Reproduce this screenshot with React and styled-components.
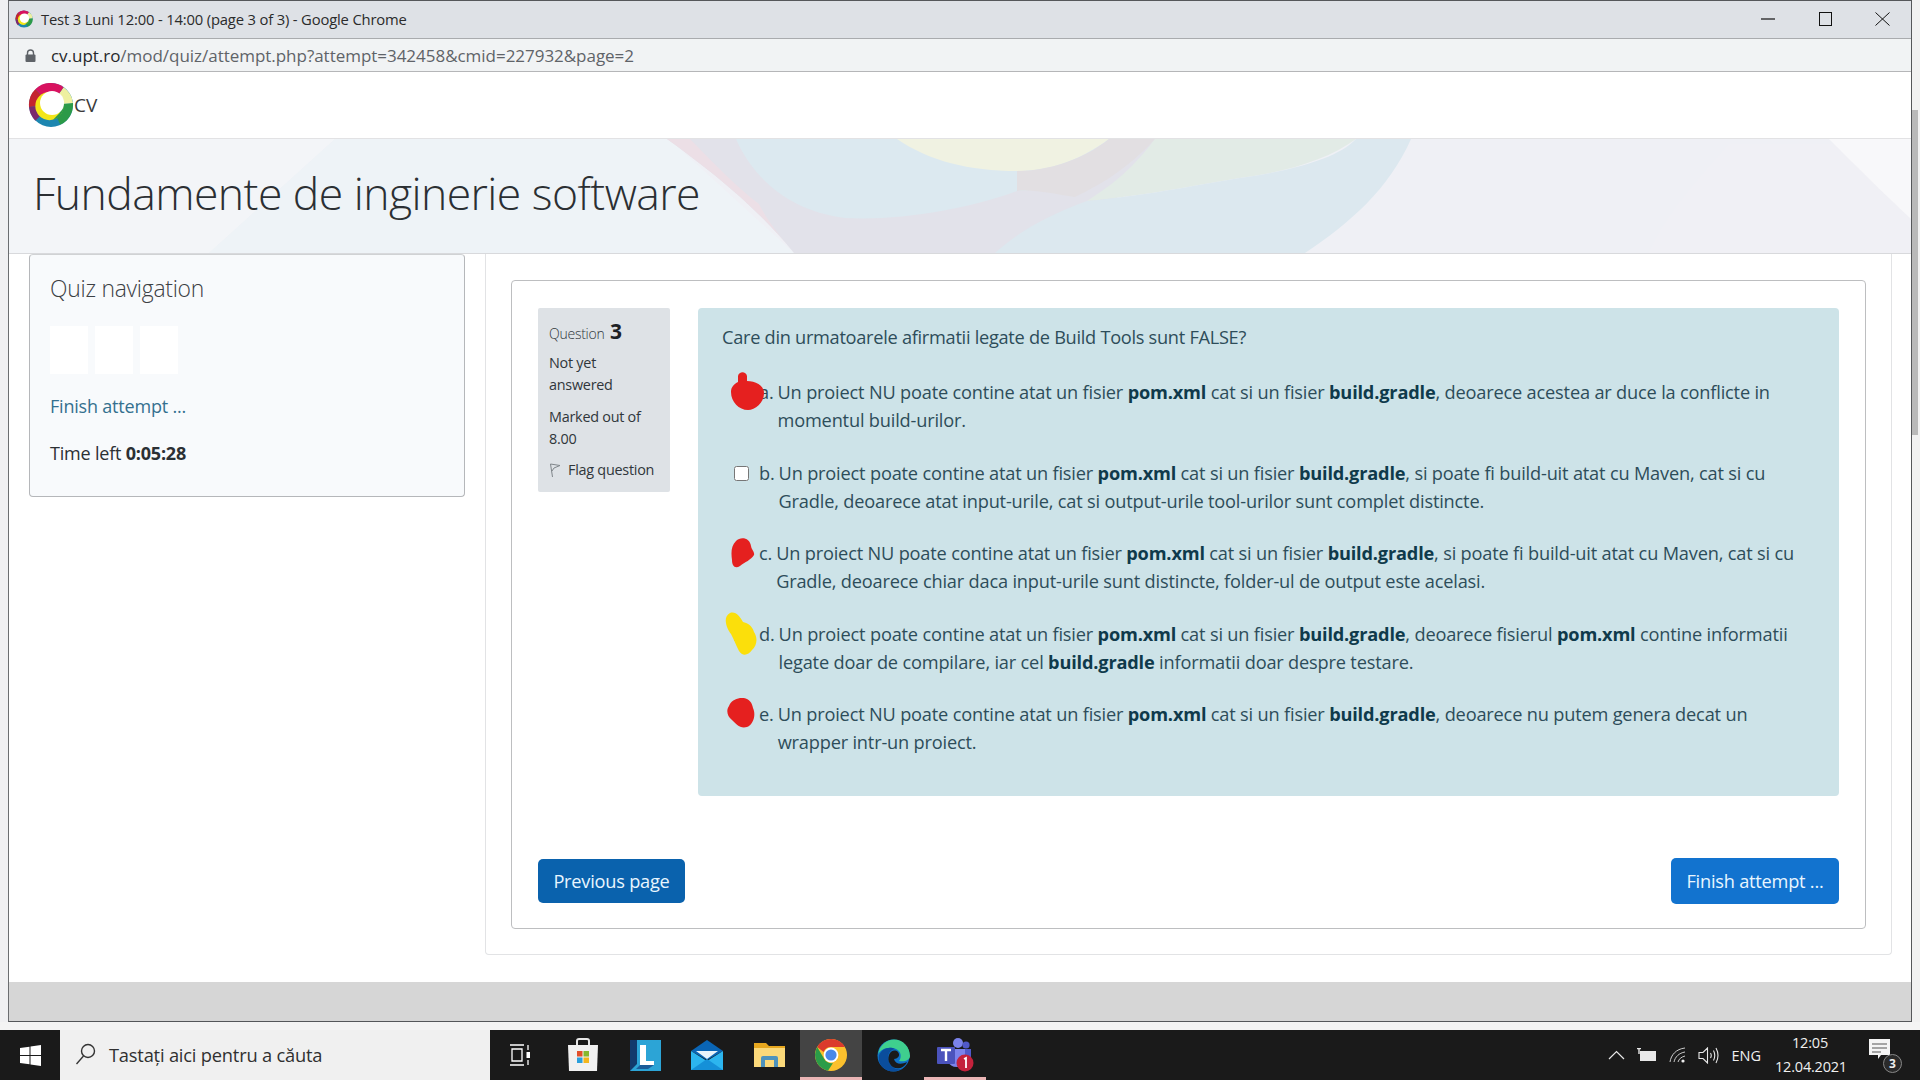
import React from 'react'
import styled, { createGlobalStyle } from 'styled-components'

const GlobalStyle = createGlobalStyle`
  html, body {
    margin: 0;
    padding: 0;
    background: #f1f1f1;
  }
  body {
    font-family: 'Open Sans', 'Noto Sans', sans-serif;
    overflow: hidden;
  }
  * {
    box-sizing: border-box;
  }
`

const Screen = styled.div`
  width: 1920px;
  height: 1080px;
  display: flex;
  flex-direction: column;
  overflow: hidden;
`

const Desktop = styled.div`
  height: 1030px;
  display: flex;
  align-items: flex-start;
  background: linear-gradient(#eeeeee, #f4f4f4);
`

const LeftEdge = styled.div`
  width: 8px;
  height: 1022px;
  background: #f0f0f2;
`

const Chrome = styled.div`
  width: 1904px;
  height: 1022px;
  display: flex;
  flex-direction: column;
  border-left: 1px solid #6b6d70;
  border-right: 1px solid #55575a;
  border-top: 1px solid #55575a;
  border-bottom: 1px solid #55575a;
  background: #ffffff;
`

const RightEdge = styled.div`
  width: 8px;
  height: 1022px;
  display: flex;
  flex-direction: column;
  background: #f1f1f1;
`

const ScrollThumb = styled.div`
  width: 6px;
  height: 325px;
  margin-top: 110px;
  background: #b9b9b9;
`

const TitleBar = styled.div`
  height: 38px;
  display: flex;
  align-items: center;
  padding: 0 0 2px 6px;
  background: #dee1e6;
  border-bottom: 1px solid #a9abae;
  color: #2b2b2b;
  font-size: 14.8px;
`

const WindowTitle = styled.span`
  margin-left: 8px;
  flex: 1;
  letter-spacing: -0.17px;
`

const WindowButton = styled.button`
  width: 46px;
  height: 36px;
  padding: 0;
  border: none;
  background: none;
  display: flex;
  align-items: center;
  justify-content: center;
  margin-right: ${p => p.$end || 0}px;
`

const UrlBar = styled.div`
  height: 33px;
  display: flex;
  align-items: center;
  gap: 15px;
  padding-left: 16px;
  background: #f1f3f4;
  border-bottom: 1px solid #b5b6b8;
  font-size: 17px;
  color: #5f6368;
  letter-spacing: -0.03px;
`

const Host = styled.span`
  color: #26282b;
`

const NavBar = styled.div`
  height: 66px;
  display: flex;
  align-items: center;
  padding-left: 19px;
  background: #ffffff;
  color: #3a3a3a;
  font-size: 19px;
`

const Hero = styled.header`
  position: relative;
  height: 116px;
  display: flex;
  align-items: center;
  padding: 0 0 7px 24px;
  background: #eff0f5;
  border-top: 1px solid #e2e2e4;
  border-bottom: 1px solid #d8d9dc;
  overflow: hidden;
`

const HeroArt = styled.svg`
  position: absolute;
  left: 0;
  top: 0;
  width: 100%;
  height: 100%;
`

const CourseTitle = styled.h1`
  position: relative;
  margin: 0;
  font-size: 44.5px;
  line-height: 56px;
  font-weight: 300;
  color: #2b2f33;
  letter-spacing: -0.55px;
`

const Body = styled.div`
  flex: 1;
  display: flex;
  align-items: flex-start;
  gap: 20px;
  padding-left: 20px;
  background: #ffffff;
`

const NavPanel = styled.aside`
  width: 436px;
  height: 243px;
  padding: 19px 20px;
  background: #f8fafc;
  border: 1px solid #b5b7ba;
  border-top-color: #d0d2d4;
  border-radius: 4px;
`

const PanelTitle = styled.h2`
  margin: 0 0 22px;
  font-size: 22.9px;
  line-height: 30px;
  font-weight: 300;
  color: #3c4044;
  letter-spacing: -0.25px;
`

const NavSquares = styled.div`
  display: flex;
  gap: 7px;
  margin-bottom: 19px;
`

const NavSquare = styled.div`
  width: 38px;
  height: 48px;
  background: #ffffff;
`

const NavLink = styled.div`
  color: #34708f;
  font-size: 18px;
  line-height: 26px;
  letter-spacing: -0.2px;
  margin-bottom: 21px;
`

const TimeLeft = styled.div`
  color: #2b3034;
  font-size: 18px;
  line-height: 26px;
  letter-spacing: -0.2px;
  strong {
    font-weight: 700;
  }
`

const Region = styled.main`
  width: 1407px;
  height: 701px;
  padding: 26px 25px;
  border: 1px solid #e2e3e5;
  border-top: none;
  border-radius: 0 0 4px 4px;
`

const Card = styled.section`
  height: 649px;
  padding: 27px 26px;
  border: 1px solid #bdbec0;
  border-radius: 4px;
  display: flex;
  flex-direction: column;
`

const QuestionRow = styled.div`
  display: flex;
  gap: 28px;
`

const InfoBox = styled.div`
  width: 132px;
  height: 184px;
  flex: none;
  padding: 8px 11px;
  background: #dee2e6;
  border-radius: 2px;
  color: #30363b;
  font-size: 14.4px;
  line-height: 22px;
  letter-spacing: -0.25px;
`

const QuestionNo = styled.div`
  font-size: 14px;
  font-weight: 300;
  line-height: 30px;
  margin-bottom: 3px;
  strong {
    font-size: 21px;
    font-weight: 700;
    color: #1d2125;
    margin-left: 2px;
  }
`

const InfoText = styled.div`
  margin-bottom: ${p => p.$gap || 0}px;
`

const FlagLine = styled.div`
  display: flex;
  align-items: center;
  gap: 7px;
  white-space: nowrap;
`

const Content = styled.div`
  width: 1143px;
  height: 488px;
  padding: 15px 24px;
  background: #cde3e8;
  border-radius: 4px;
  color: #2d4d5a;
  font-size: 18.2px;
  line-height: 28px;
  letter-spacing: -0.18px;
  strong {
    font-weight: 700;
    color: #0f3a4b;
  }
`

const Prompt = styled.p`
  margin: 0 0 27px;
  letter-spacing: -0.28px;
`

const Options = styled.div`
  display: flex;
  flex-direction: column;
  gap: 24.5px;
`

const Option = styled.div`
  position: relative;
  display: flex;
  padding-left: 12px;
`

const CheckSlot = styled.input`
  width: 15px;
  height: 15px;
  flex: none;
  margin: 7px 10px 0 0;
`

const OptionLetter = styled.span`
  margin-right: 4px;
  white-space: nowrap;
`

const OptionText = styled.div`
  white-space: nowrap;
`

const Blob = styled.svg`
  position: absolute;
  left: ${p => p.$left}px;
  top: ${p => p.$top}px;
`

const ButtonRow = styled.div`
  margin-top: auto;
  display: flex;
  align-items: center;
  justify-content: space-between;
  margin-bottom: -3px;
`

const PageButton = styled.button`
  height: ${p => p.$height}px;
  width: ${p => p.$width}px;
  padding: 0;
  border: none;
  border-radius: 5px;
  background: ${p => p.$bg};
  color: #e9f6ff;
  font-family: inherit;
  font-size: 18.2px;
  letter-spacing: -0.22px;
`

const Footer = styled.div`
  height: 39px;
  background: #d6d6d6;
`

const Taskbar = styled.footer`
  height: 50px;
  display: flex;
  align-items: stretch;
  background: #1a1a1a;
  color: #f0f0f0;
`

const StartButton = styled.div`
  width: 60px;
  display: flex;
  align-items: center;
  justify-content: center;
`

const SearchBox = styled.div`
  width: 430px;
  display: flex;
  align-items: center;
  gap: 13px;
  padding: 0 0 2px 15px;
  background: #f0f0f0;
  color: #303030;
  font-size: 18.3px;
  letter-spacing: -0.2px;
`

const TaskButton = styled.div`
  width: 62px;
  display: flex;
  align-items: center;
  justify-content: center;
  background: ${p => (p.$active ? '#444444' : 'transparent')};
  border-bottom: 3px solid ${p => (p.$open ? '#eab5b5' : 'transparent')};
  padding-top: 3px;
`

const Tray = styled.div`
  margin-left: auto;
  display: flex;
  align-items: center;
  gap: 12px;
  padding-right: 20px;
  font-size: 14.5px;
`

const Clock = styled.div`
  width: 70px;
  margin: 0 12px 0 2px;
  text-align: center;
  font-size: 14.5px;
  line-height: 24px;
  letter-spacing: -0.2px;
  white-space: nowrap;
`

const Notify = styled.div`
  position: relative;
  width: 31px;
  height: 32px;
`

const NotifyCount = styled.span`
  position: absolute;
  right: -2px;
  bottom: -2px;
  width: 19px;
  height: 19px;
  border: 1px solid #888888;
  border-radius: 50%;
  background: #2a2a2a;
  text-align: center;
  color: #eeeeee;
  font-size: 12px;
  font-weight: 700;
  line-height: 17px;
`

// ring logo, same drawing for the favicon and the site header
const RingLogo = ({ size }) => (
  <svg width={size} height={size} viewBox="0 0 44 44">
    <circle cx="22" cy="22" r="21" fill="#1c86b0" />
    <path d="M22 22 L43 20 A21 21 0 0 1 31 41 Z" fill="#2c9a48" />
    <path d="M22 22 L34 5 A21 21 0 0 1 43 20 Z" fill="#eef0a0" />
    <path d="M22 22 L7 7 A21 21 0 0 1 34 5 Z" fill="#d8125f" />
    <path d="M22 22 L1 24 A21 21 0 0 1 7 7 Z" fill="#c4242f" />
    <path d="M22 22 L1 24 A21 21 0 0 0 7 37 Z" fill="#7b2a6e" />
    <circle cx="20.5" cy="23" r="13.5" fill="#f3e619" />
    <path d="M34 20 A13.5 13.5 0 0 1 24 36 L30 30 Z" fill="#2c9a48" />
    <circle cx="23" cy="20" r="11.5" fill="#ffffff" />
  </svg>
)

const LockIcon = () => (
  <svg width="11" height="13" viewBox="0 0 11 13">
    <path d="M2.5 6 V4 A3 3 0 0 1 8.5 4 V6" fill="none" stroke="#5f6368" strokeWidth="1.4" />
    <rect x="0.5" y="5.5" width="10" height="7.5" rx="1" fill="#5f6368" />
  </svg>
)

const FlagIcon = () => (
  <svg width="12" height="15" viewBox="0 0 12 15">
    <path d="M1.5 1 L3.5 14 M1.5 1 L11 2.5 L5 5 L3 8" fill="none" stroke="#80868b" strokeWidth="1" />
  </svg>
)

const HeroShapes = () => (
  <HeroArt viewBox="0 0 1902 114" preserveAspectRatio="none">
    <path d="M0 0 H326 L200 114 H0 Z" fill="#f3f5f8" />
    <path d="M326 0 H660 L785 114 H200 Z" fill="#eef3f7" />
    <path d="M658 0 H1150 L1100 70 L1000 114 H785 C750 70 700 30 658 0 Z" fill="#e2e2ea" />
    <path d="M658 0 H681 C705 25 730 50 750 65 C760 85 772 98 785 114 C750 70 700 30 658 0 Z" fill="#ecdfe6" />
    <path d="M727 0 H1141 C1110 30 1060 50 1008 52 C960 70 890 82 836 79 C780 72 745 40 727 0 Z" fill="#dce9f0" />
    <path d="M888 0 H1100 C1070 22 1040 32 1008 32 C960 32 920 22 888 0 Z" fill="#f0f2e2" />
    <path d="M1008 32 C1040 32 1075 20 1100 0 H1146 C1120 28 1095 44 1066 58 C1045 55 1025 50 1008 52 Z" fill="#e2dfe2" />
    <path d="M1146 0 H1347 C1320 20 1280 32 1238 38 C1190 45 1150 55 1078 62 C1105 45 1125 28 1146 0 Z" fill="#e2ebe6" />
    <path d="M1402 0 C1380 50 1340 85 1296 114 H986 C1010 92 1040 76 1078 62 C1150 55 1190 45 1238 38 C1290 30 1330 18 1347 0 Z" fill="#dce8ef" />
    <path d="M1640 114 C1660 70 1690 40 1720 5 L1830 5 C1860 40 1880 55 1902 80 V114 Z" fill="#f0f0f5" />
    <path d="M1820 0 H1902 V80 C1870 50 1850 30 1820 0 Z" fill="#f8f8fa" />
  </HeroArt>
)

const RedBlobA = () => (
  <Blob $left={9} $top={-6} width="34" height="38" viewBox="0 0 34 38">
    <path d="M7 4 C8 -1 15 -1 16 4 L16 9 C24 9 33 13 33 21 C33 31 24 38 17 38 C8 38 0 30 0 20 C0 15 3 12 7 10 Z" fill="#e5201f" />
  </Blob>
)

const RedBlobC = () => (
  <Blob $left={9} $top={-1} width="24" height="30" viewBox="0 0 24 30">
    <path d="M5 3 C10 -2 19 0 20 8 C20 11 24 14 23 17 C20 22 14 24 9 28 C4 31 1 28 1 22 C0 15 0 8 5 3 Z" fill="#e5201f" />
  </Blob>
)

const YellowBlob = () => (
  <Blob $left={2} $top={-8} width="34" height="44" viewBox="0 0 34 44">
    <path d="M6 1 C12 -1 16 5 19 10 C23 11 28 13 30 20 C34 26 33 34 28 38 C24 44 18 44 15 39 C12 33 10 28 7 22 C3 17 -2 5 6 1 Z" fill="#fbdf0b" />
  </Blob>
)

const RedBlobE = () => (
  <Blob $left={5} $top={-2} width="28" height="30" viewBox="0 0 28 30">
    <path d="M13 0 C21 -1 25 4 26 10 C29 16 27 26 20 29 C13 31 9 26 5 22 C0 18 -1 12 2 8 C4 3 8 1 13 0 Z" fill="#e5201f" />
  </Blob>
)

const WindowsLogo = () => (
  <svg width="21" height="21" viewBox="0 0 21 21" fill="#ffffff">
    <path d="M0 3 L9.5 1.7 V10 H0 Z M10.5 1.5 L21 0 V10 H10.5 Z M0 11 H9.5 V19.3 L0 18 Z M10.5 11 H21 V21 L10.5 19.5 Z" />
  </svg>
)

const SearchGlass = () => (
  <svg width="21" height="22" viewBox="0 0 21 22" fill="none" stroke="#333333" strokeWidth="1.4">
    <circle cx="13" cy="8" r="6.5" />
    <path d="M8.5 13 L1.5 21" />
  </svg>
)

const TaskView = () => (
  <svg width="24" height="22" viewBox="0 0 24 22" fill="none" stroke="#ffffff" strokeWidth="1.3">
    <path d="M1 1 H15 M1 21 H15 M3 5 H13 V17 H3 Z M19 1 V6 M19 16 V21" />
    <rect x="17.5" y="8" width="3.5" height="6" fill="#ffffff" stroke="none" />
  </svg>
)

const StoreIcon = () => (
  <svg width="32" height="34" viewBox="0 0 32 34">
    <path d="M10 8 V3 Q10 1 12 1 H20 Q22 1 22 3 V8" fill="none" stroke="#e6e6e6" strokeWidth="2" />
    <path d="M1 7 H31 L30 33 H2 Z" fill="#f1f1f1" />
    <rect x="10" y="13" width="5.5" height="5.5" fill="#e2502b" />
    <rect x="16.5" y="13" width="5.5" height="5.5" fill="#86b82f" />
    <rect x="10" y="19.5" width="5.5" height="5.5" fill="#2a9fdc" />
    <rect x="16.5" y="19.5" width="5.5" height="5.5" fill="#f3b61c" />
  </svg>
)

const LIcon = () => (
  <svg width="31" height="31" viewBox="0 0 31 31">
    <rect width="31" height="31" fill="#2ca4d6" />
    <path d="M0 0 H7 V24 L0 31 Z" fill="#123a6c" />
    <path d="M10 5 H16 V21 H24 V25 H10 Z" fill="#ffffff" />
    <path d="M10 25 H24 L18 29 H6 Z" fill="#1b5c99" />
  </svg>
)

const MailIcon = () => (
  <svg width="32" height="30" viewBox="0 0 32 30">
    <path d="M0 11 L16 0 L32 11 L16 20 Z" fill="#0a65b5" />
    <path d="M5 11 H27 L16 19 Z" fill="#e9f3fa" />
    <path d="M0 11 L16 21 L32 11 V30 H0 Z" fill="#2cb5ef" />
    <path d="M0 30 L16 19 L32 30 Z" fill="#1590d8" />
  </svg>
)

const FolderIcon = () => (
  <svg width="31" height="28" viewBox="0 0 31 28">
    <path d="M0 2 H12 L15 5 H31 V24 H0 Z" fill="#e8a81f" />
    <rect y="7" width="31" height="19" fill="#fbd97a" />
    <path d="M7 26 V17 Q7 15 9 15 H22 Q24 15 24 17 V26 H20 V19 H11 V26 Z" fill="#4e93bd" />
  </svg>
)

const ChromeIcon = () => (
  <svg width="32" height="32" viewBox="0 0 32 32">
    <circle cx="16" cy="16" r="16" fill="#fbc02d" />
    <path d="M16 0 A16 16 0 0 1 29.9 8 H16 A8 8 0 0 0 8.6 13 L2.2 8 A16 16 0 0 1 16 0 Z" fill="#db3a2c" />
    <path d="M2.2 8 L9 19.5 A8 8 0 0 0 18 24 L13 31.7 A16 16 0 0 1 2.2 8 Z" fill="#2b9c48" />
    <circle cx="16" cy="16" r="7.4" fill="#ffffff" />
    <circle cx="16" cy="16" r="5.6" fill="#4a88e8" />
  </svg>
)

const EdgeIcon = () => (
  <svg width="33" height="33" viewBox="0 0 33 33">
    <circle cx="16.5" cy="16.5" r="16" fill="#0f72c8" />
    <path d="M1 16 C2 6 10 0.5 17 0.5 C26 0.5 33 8 33 17 C33 21 28 23 22 22 C25 18 24 12 19 10 C12 7 3 10 1 16 Z" fill="#3fcf8e" />
    <path d="M2 17 C4 9 13 7 18 10 C12 11 10 17 12 23 C14 29 21 32 26 29 C20 34 8 34 3 25 C2 22 1.5 20 2 17 Z" fill="#0a4d9c" />
    <path d="M12 16 C13 12 18 10 21 13 C24 17 20 20 17 20 C18 25 24 26 30 23 C27 30 17 32 13 25 C11 22 11 19 12 16 Z" fill="#1a1a1a" />
  </svg>
)

const TeamsIcon = () => (
  <svg width="40" height="36" viewBox="0 0 40 36">
    <circle cx="23" cy="6" r="5" fill="#7b83eb" />
    <circle cx="31" cy="8" r="3.6" fill="#5059c9" />
    <path d="M26 12 H36 V22 Q36 27 30 27 H26 Z" fill="#5059c9" />
    <path d="M13 12 H30 V24 Q30 30 22 30 Q15 30 13 24 Z" fill="#7b83eb" />
    <rect x="2" y="10" width="18" height="17" rx="1" fill="#4b53bc" />
    <path d="M6 13 H16 M11 13 V24" stroke="#ffffff" strokeWidth="2.4" />
    <circle cx="30" cy="26" r="8.5" fill="#c4223c" />
    <path d="M29 22 L31 21 V31" fill="none" stroke="#ffffff" strokeWidth="1.8" />
  </svg>
)

const TrayChevron = () => (
  <svg width="17" height="10" viewBox="0 0 17 10" fill="none" stroke="#e8e8e8" strokeWidth="1.2">
    <path d="M1 9 L8.5 1.5 L16 9" />
  </svg>
)

const TrayBattery = () => (
  <svg width="20" height="14" viewBox="0 0 20 14">
    <rect x="3" y="3" width="16" height="10" fill="#e8e8e8" />
    <path d="M0 0.5 H4 M2 0 V6" stroke="#e8e8e8" strokeWidth="1.4" />
  </svg>
)

const TrayWifi = () => (
  <svg width="17" height="16" viewBox="0 0 17 16" fill="none" stroke="#cccccc" strokeWidth="1">
    <path d="M1 15 C2 8 7 2 16 1 M5 15 C6 10 10 6 16 5 M9 15 C10 12 12 10 16 9" />
    <circle cx="14" cy="14" r="1.6" fill="#eeeeee" stroke="none" />
  </svg>
)

const TraySpeaker = () => (
  <svg width="21" height="17" viewBox="0 0 21 17" fill="none" stroke="#e8e8e8" strokeWidth="1.1">
    <path d="M1 5.5 H5 L9.5 1 V16 L5 11.5 H1 Z M12.5 6 Q14 8.5 12.5 11 M15.5 3.5 Q18 8.5 15.5 13.5 M18 1 Q22 8.5 18 16" />
  </svg>
)

const NotifyBubble = () => (
  <svg width="22" height="21" viewBox="0 0 22 21">
    <path d="M0 0 H21 V16 H12 L9 20 V16 H0 Z" fill="#f4f4f4" />
    <path d="M3 5 H18 M3 9 H18 M3 13 H12" stroke="#555555" strokeWidth="1" />
  </svg>
)

const App = () => {
  return (
    <Screen>
      <GlobalStyle />
      <Desktop>
        <LeftEdge />
        <Chrome>
          <TitleBar>
            <RingLogo size={18} />
            <WindowTitle>Test 3 Luni 12:00 - 14:00 (page 3 of 3) - Google Chrome</WindowTitle>
            <WindowButton $end={11}>
              <svg width="14" height="2" viewBox="0 0 14 2"><path d="M0 1 H14" stroke="#111" strokeWidth="1.2" /></svg>
            </WindowButton>
            <WindowButton $end={11}>
              <svg width="13" height="14" viewBox="0 0 13 14"><rect x="0.5" y="0.5" width="12" height="13" fill="none" stroke="#111" /></svg>
            </WindowButton>
            <WindowButton $end={6}>
              <svg width="15" height="14" viewBox="0 0 15 14"><path d="M0.5 0.5 L14.5 13.5 M14.5 0.5 L0.5 13.5" stroke="#111" /></svg>
            </WindowButton>
          </TitleBar>
          <UrlBar>
            <LockIcon />
            <span><Host>cv.upt.ro</Host>/mod/quiz/attempt.php?attempt=342458&amp;cmid=227932&amp;page=2</span>
          </UrlBar>
          <NavBar>
            <RingLogo size={46} />
            <span>CV</span>
          </NavBar>
          <Hero>
            <HeroShapes />
            <CourseTitle>Fundamente de inginerie software</CourseTitle>
          </Hero>
          <Body>
            <NavPanel>
              <PanelTitle>Quiz navigation</PanelTitle>
              <NavSquares>
                <NavSquare />
                <NavSquare />
                <NavSquare />
              </NavSquares>
              <NavLink>Finish attempt ...</NavLink>
              <TimeLeft>Time left <strong>0:05:28</strong></TimeLeft>
            </NavPanel>
            <Region>
              <Card>
                <QuestionRow>
                  <InfoBox>
                    <QuestionNo>Question <strong>3</strong></QuestionNo>
                    <InfoText $gap={10}>Not yet<br />answered</InfoText>
                    <InfoText $gap={9}>Marked out of<br />8.00</InfoText>
                    <FlagLine><FlagIcon />Flag question</FlagLine>
                  </InfoBox>
                  <Content>
                    <Prompt>Care din urmatoarele afirmatii legate de Build Tools sunt FALSE?</Prompt>
                    <Options>
                      <Option>
                        <CheckSlot type="checkbox" />
                        <OptionLetter>a.</OptionLetter>
                        <OptionText>
                          Un proiect NU poate contine atat un fisier <strong>pom.xml</strong> cat si un fisier <strong>build.gradle</strong>, deoarece acestea ar duce la conflicte in<br />
                          momentul build-urilor.
                        </OptionText>
                        <RedBlobA />
                      </Option>
                      <Option>
                        <CheckSlot type="checkbox" />
                        <OptionLetter>b.</OptionLetter>
                        <OptionText>
                          Un proiect poate contine atat un fisier <strong>pom.xml</strong> cat si un fisier <strong>build.gradle</strong>, si poate fi build-uit atat cu Maven, cat si cu<br />
                          Gradle, deoarece atat input-urile, cat si output-urile tool-urilor sunt complet distincte.
                        </OptionText>
                      </Option>
                      <Option>
                        <CheckSlot type="checkbox" />
                        <OptionLetter>c.</OptionLetter>
                        <OptionText>
                          Un proiect NU poate contine atat un fisier <strong>pom.xml</strong> cat si un fisier <strong>build.gradle</strong>, si poate fi build-uit atat cu Maven, cat si cu<br />
                          Gradle, deoarece chiar daca input-urile sunt distincte, folder-ul de output este acelasi.
                        </OptionText>
                        <RedBlobC />
                      </Option>
                      <Option>
                        <CheckSlot type="checkbox" />
                        <OptionLetter>d.</OptionLetter>
                        <OptionText>
                          Un proiect poate contine atat un fisier <strong>pom.xml</strong> cat si un fisier <strong>build.gradle</strong>, deoarece fisierul <strong>pom.xml</strong> contine informatii<br />
                          legate doar de compilare, iar cel <strong>build.gradle</strong> informatii doar despre testare.
                        </OptionText>
                        <YellowBlob />
                      </Option>
                      <Option>
                        <CheckSlot type="checkbox" />
                        <OptionLetter>e.</OptionLetter>
                        <OptionText>
                          Un proiect NU poate contine atat un fisier <strong>pom.xml</strong> cat si un fisier <strong>build.gradle</strong>, deoarece nu putem genera decat un<br />
                          wrapper intr-un proiect.
                        </OptionText>
                        <RedBlobE />
                      </Option>
                    </Options>
                  </Content>
                </QuestionRow>
                <ButtonRow>
                  <PageButton $bg="#0a62ad" $width={147} $height={44}>Previous page</PageButton>
                  <PageButton $bg="#1273cf" $width={168} $height={46}>Finish attempt ...</PageButton>
                </ButtonRow>
              </Card>
            </Region>
          </Body>
          <Footer />
        </Chrome>
        <RightEdge>
          <ScrollThumb />
        </RightEdge>
      </Desktop>
      <Taskbar>
        <StartButton><WindowsLogo /></StartButton>
        <SearchBox>
          <SearchGlass />
          <span>Tastați aici pentru a căuta</span>
        </SearchBox>
        <TaskButton><TaskView /></TaskButton>
        <TaskButton><StoreIcon /></TaskButton>
        <TaskButton><LIcon /></TaskButton>
        <TaskButton><MailIcon /></TaskButton>
        <TaskButton><FolderIcon /></TaskButton>
        <TaskButton $active $open><ChromeIcon /></TaskButton>
        <TaskButton><EdgeIcon /></TaskButton>
        <TaskButton $open><TeamsIcon /></TaskButton>
        <Tray>
          <TrayChevron />
          <TrayBattery />
          <TrayWifi />
          <TraySpeaker />
          <span>ENG</span>
          <Clock>12:05<br />12.04.2021</Clock>
          <Notify>
            <NotifyBubble />
            <NotifyCount>3</NotifyCount>
          </Notify>
        </Tray>
      </Taskbar>
    </Screen>
  )
}

export default App
